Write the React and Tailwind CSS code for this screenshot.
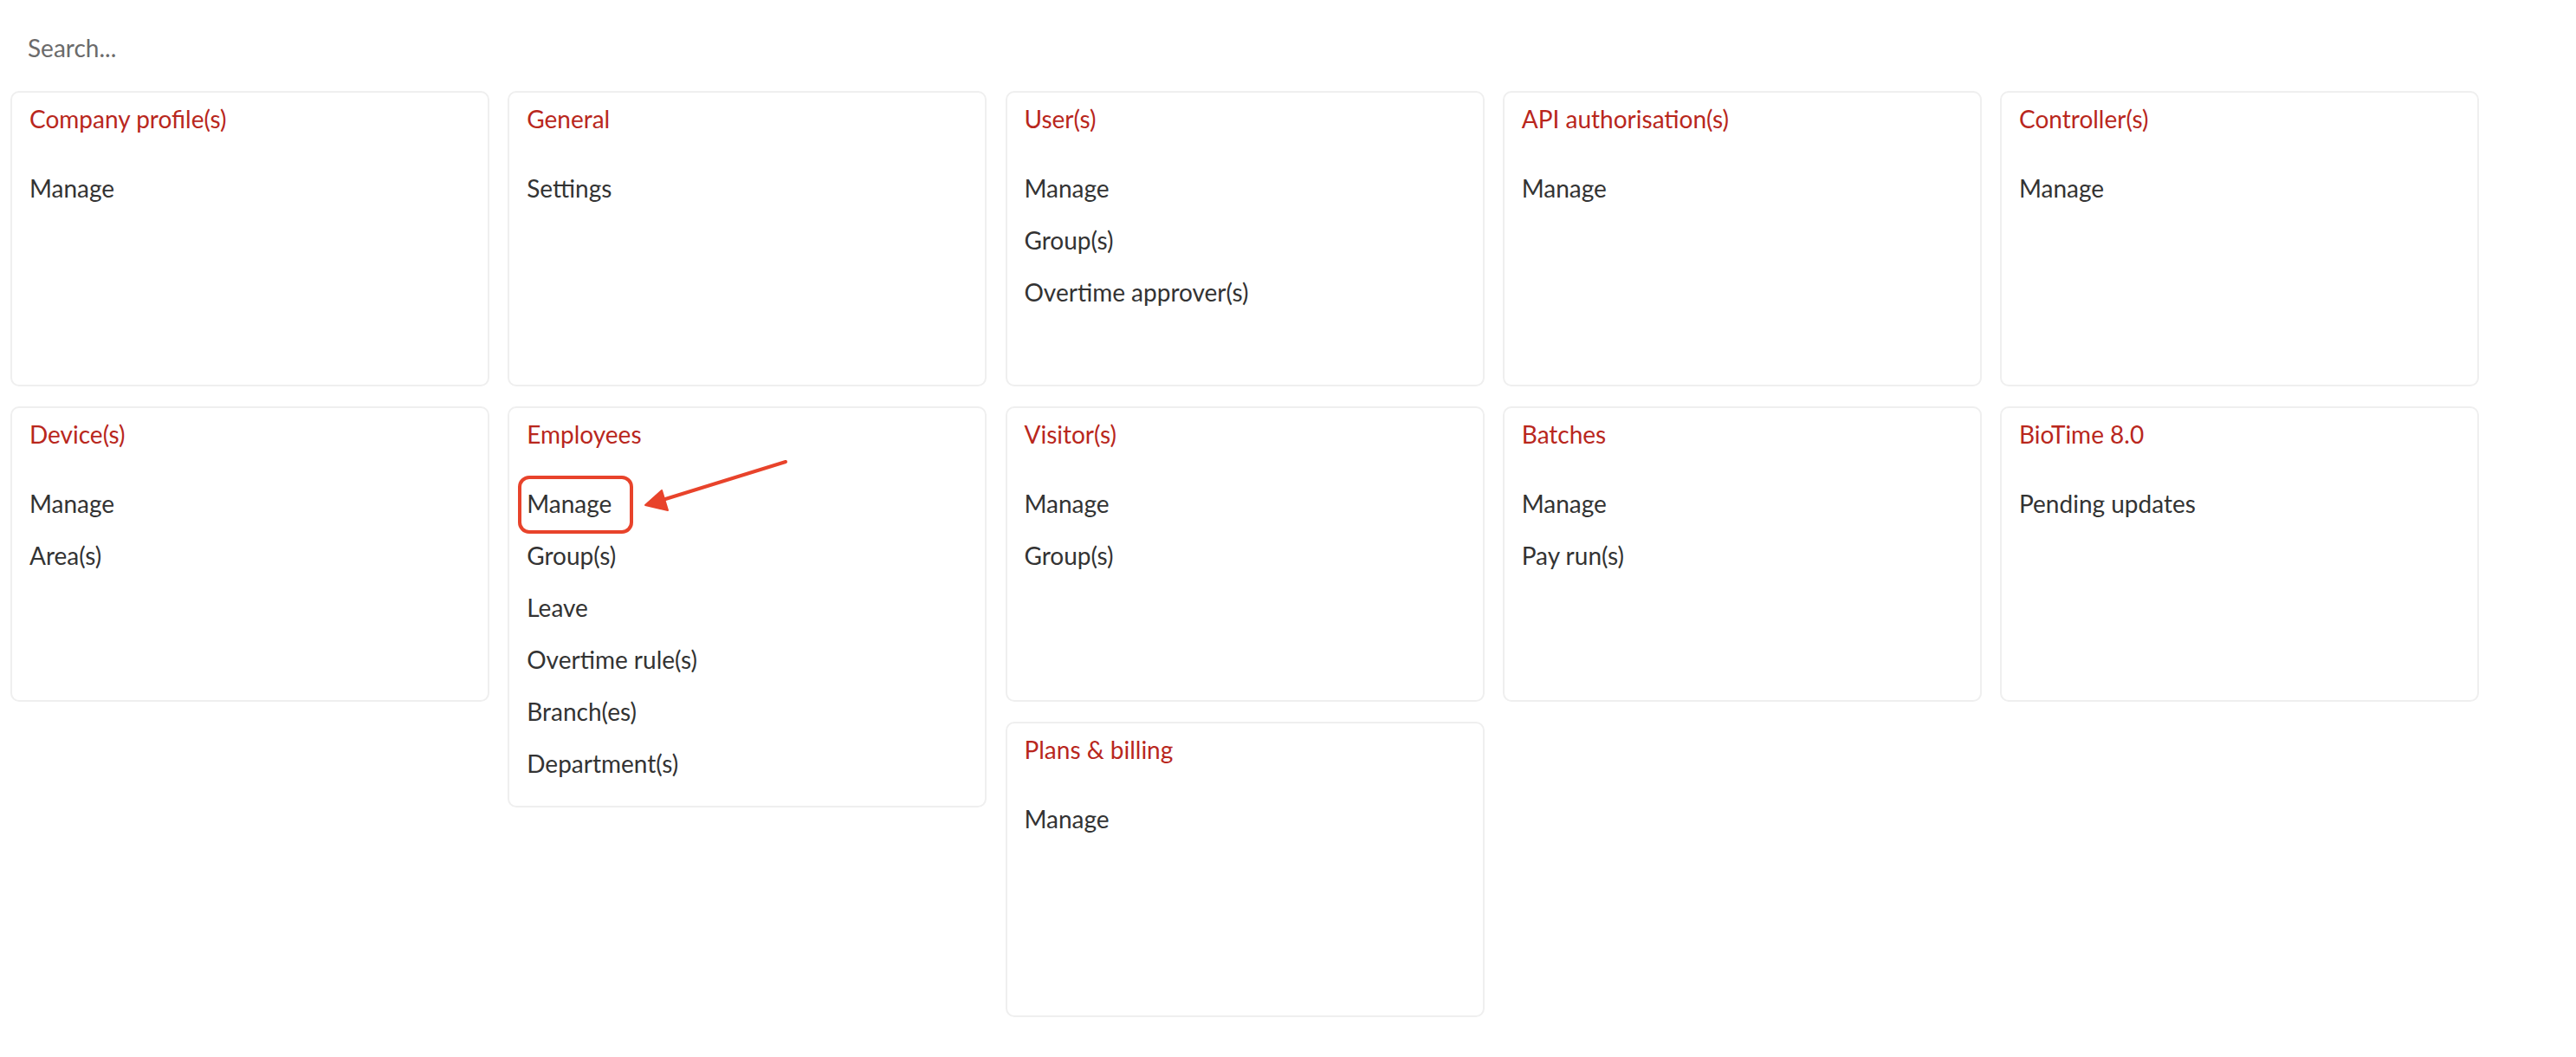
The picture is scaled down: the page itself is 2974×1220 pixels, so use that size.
import React from "react";

const columns = [
  [
    { title: "Company profile(s)", items: ["Manage"] },
    { title: "Device(s)", items: ["Manage", "Area(s)"] },
  ],
  [
    { title: "General", items: ["Settings"] },
    {
      title: "Employees",
      items: ["Manage", "Group(s)", "Leave", "Overtime rule(s)", "Branch(es)", "Department(s)"],
    },
  ],
  [
    { title: "User(s)", items: ["Manage", "Group(s)", "Overtime approver(s)"] },
    { title: "Visitor(s)", items: ["Manage", "Group(s)"] },
    { title: "Plans & billing", items: ["Manage"] },
  ],
  [
    { title: "API authorisation(s)", items: ["Manage"] },
    { title: "Batches", items: ["Manage", "Pay run(s)"] },
  ],
  [
    { title: "Controller(s)", items: ["Manage"] },
    { title: "BioTime 8.0", items: ["Pending updates"] },
  ],
];

function SettingsCard({ title, items }) {
  return (
    <div className="min-h-[341px] rounded-[10px] border-2 border-[#efefef] bg-white pt-[10px] pb-[19px] px-[20px]">
      <div className="text-[28px] leading-[40px] text-[#b9271d]">{title}</div>
      <div className="mt-[30px] flex flex-col">
        {items.map((item) => (
          <a key={item} className="cursor-pointer text-[28px] leading-[60px] text-[#333333]">
            {item}
          </a>
        ))}
      </div>
    </div>
  );
}

export default function App() {
  return (
    <div className="relative min-h-[1220px] bg-white pt-[25px] px-[12px] font-['Lato','Liberation_Sans',sans-serif]">
      <input
        type="text"
        placeholder="Search..."
        className="h-[60px] w-[600px] px-[20px] text-[28px] text-[#333] outline-none placeholder:text-[#6b6b6b]"
      />

      <div className="mt-[20px] flex items-start gap-x-[21.25px]">
        {columns.map((col, i) => (
          <div key={i} className="flex w-[553px] flex-col gap-y-[23px]">
            {col.map((card) => (
              <SettingsCard key={card.title} {...card} />
            ))}
          </div>
        ))}
      </div>

      {/* annotation: highlight on Employees > Manage */}
      <svg
        className="pointer-events-none absolute left-0 top-0"
        width="2974"
        height="1220"
        viewBox="0 0 2974 1220"
      >
        <rect x="600" y="551" width="129" height="63" rx="11" fill="none" stroke="#e8432b" strokeWidth="4" />
        <line x1="907" y1="533" x2="765" y2="577" stroke="#e8432b" strokeWidth="4" strokeLinecap="round" />
        <polygon points="745,583 764,566 771,589" fill="#e8432b" stroke="#e8432b" strokeWidth="2" strokeLinejoin="round" />
      </svg>
    </div>
  );
}
